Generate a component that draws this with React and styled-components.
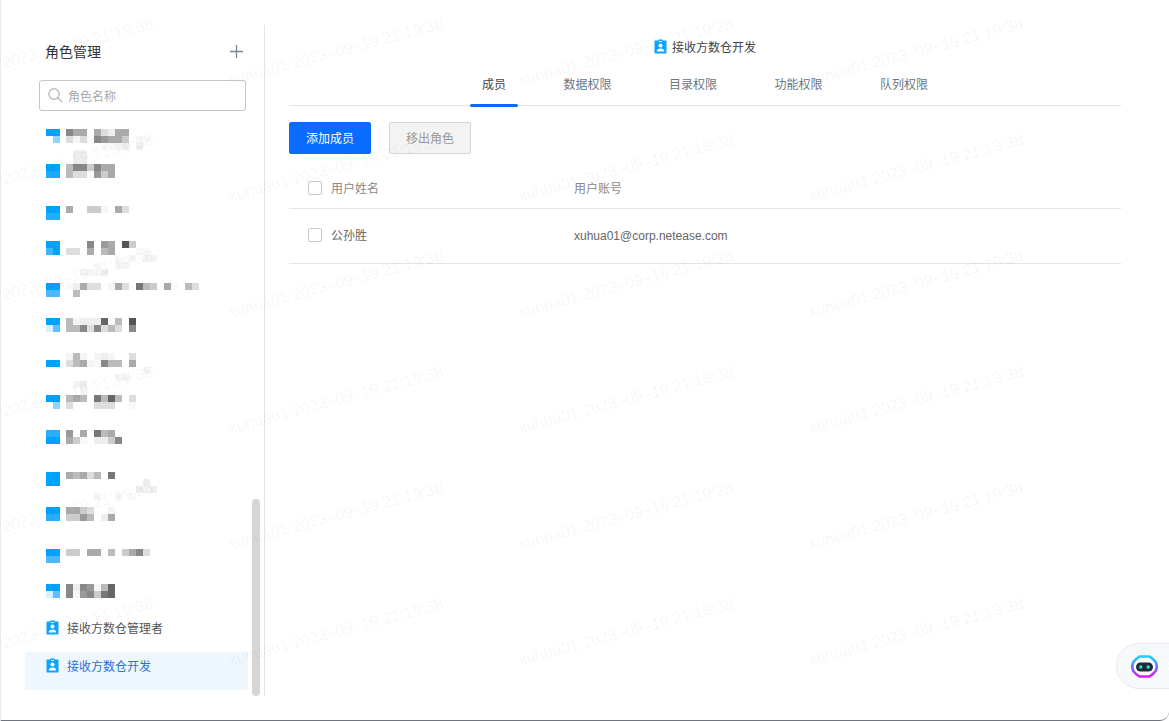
import React from "react";
import styled, { createGlobalStyle } from "styled-components";

const FONT = `"Liberation Sans", "Noto Sans CJK SC", sans-serif`;

const Global = createGlobalStyle`
  html, body { margin: 0; padding: 0; background: #fff; }
  body { font-family: ${FONT}; font-size: 12px; overflow: hidden; }
  * { box-sizing: border-box; }
`;

const Frame = styled.div`
  position: relative;
  width: 1169px;
  height: 721px;
  overflow: hidden;
  display: flex;
  padding: 25px 48px 24px 0;
  background: #fff;
  border-left: 1px solid #e6eaf2;
  border-bottom: 1px solid #6f757d;
  border-bottom-right-radius: 9px;
`;

const Sidebar = styled.aside`
  position: relative;
  flex: 0 0 264px;
  border-right: 1px solid #e4e4e6;
  display: flex;
  flex-direction: column;
`;

const SideHeader = styled.div`
  height: 55px;
  padding: 0 21px 3px 44px;
  display: flex;
  align-items: center;
  justify-content: space-between;
`;

const SideTitle = styled.h2`
  margin: 0;
  font-size: 14px;
  font-weight: 400;
  color: #333;
`;

const SearchBox = styled.div`
  margin-left: 38px;
  width: 207px;
  height: 31px;
  border: 1px solid #c6c6c6;
  border-radius: 3px;
  display: flex;
  align-items: center;
  gap: 5px;
  padding: 0 0 1px 7px;
  color: #a8a8a8;
  font-size: 12px;
`;

const Mosaic = styled.svg`
  display: block;
  margin: 14px 0 0 45px;
  flex: none;
`;

const Item = styled.div`
  margin-left: 24px;
  width: 223px;
  height: 38px;
  padding: 0 0 12px 21px;
  display: flex;
  align-items: center;
  gap: 8px;
  font-size: 12px;
  color: ${(p) => (p.$active ? "#2a6fdb" : "#555")};
  background: ${(p) => (p.$active ? "#eef6fe" : "transparent")};
`;

const ScrollThumb = styled.div`
  position: absolute;
  left: 251px;
  top: 474px;
  width: 8px;
  height: 197px;
  border-radius: 4px;
  background: #d6d6d6;
`;

const Main = styled.main`
  flex: 1;
  margin-left: 24px;
  display: flex;
  flex-direction: column;
`;

const RoleHeading = styled.div`
  height: 45px;
  padding-bottom: 2px;
  display: flex;
  align-items: center;
  justify-content: center;
  gap: 5px;
  color: #444;
  font-size: 12px;
`;

const Tabs = styled.nav`
  height: 36px;
  display: flex;
  justify-content: center;
  gap: 33.5px;
  border-bottom: 1px solid #e2e4e8;
`;

const Tab = styled.div`
  position: relative;
  width: ${(p) => (p.$active ? 48 : 72)}px;
  padding-top: 6px;
  text-align: center;
  font-size: 12px;
  line-height: 18px;
  color: ${(p) => (p.$active ? "#444" : "#6b7685")};
  ${(p) =>
    p.$active &&
    `&::after {
      content: "";
      position: absolute;
      left: 0; right: 0; bottom: -2px;
      height: 3px;
      border-radius: 2px;
      background: #0a6cff;
    }`}
`;

const Toolbar = styled.div`
  margin-top: 16px;
  display: flex;
  gap: 18px;
`;

const Button = styled.div`
  width: 82px;
  height: 32px;
  padding-bottom: 2px;
  display: flex;
  align-items: center;
  justify-content: center;
  border-radius: 2px;
  font-size: 12px;
  color: ${(p) => (p.$primary ? "#fff" : "#999")};
  background: ${(p) => (p.$primary ? "#0a6cff" : "#f3f3f3")};
  border: 1px solid ${(p) => (p.$primary ? "#0a6cff" : "#d6d6d6")};
`;

const Row = styled.div`
  height: 55px;
  padding-top: ${(p) => p.$pt || 0}px;
  padding-bottom: ${(p) => p.$pb || 0}px;
  display: grid;
  grid-template-columns: 285px 1fr;
  align-items: center;
  border-bottom: 1px solid #e2e4e8;
  color: ${(p) => p.$color};
  font-size: 12px;
`;

const NameCell = styled.div`
  display: flex;
  align-items: center;
  gap: 9px;
  padding-left: 19px;
`;

const Label = styled.span`
  margin-bottom: ${(p) => (p.$up > 0 ? p.$up * 2 : 0)}px;
  margin-top: ${(p) => (p.$up < 0 ? -p.$up * 2 : 0)}px;
`;

const Check = styled.span`
  width: 14px;
  height: 14px;
  border: 1px solid #c9c9c9;
  border-radius: 2px;
  background: #fff;
`;

const Overlay = styled.div`
  position: absolute;
  left: -100px;
  top: -6px;
  display: grid;
  grid-template-columns: repeat(4, 290px);
  grid-auto-rows: 116px;
  pointer-events: none;
`;

const Mark = styled.span`
  display: flex;
  align-items: center;
  justify-content: center;
  white-space: nowrap;
  font-size: 16px;
  font-family: "Liberation Sans", sans-serif;
  color: rgba(0, 0, 0, 0.05);
  transform: rotate(-15deg);
`;

const Robot = styled.div`
  position: absolute;
  left: 1115px;
  top: 643px;
  width: 90px;
  height: 46px;
  border-radius: 23px;
  background: #f7f8fa;
  border: 1px solid #e6e9f1;
  display: flex;
  align-items: center;
  padding-left: 13px;
  gap: 7px;
`;

const B = "#00a2ff";
const ICONS = [
  [0, B, B, null, "#8fd4ff"],
  [5, B, B, "#1aabff", "#1aabff"],
  [11, B, B, "#22adff", "#22adff"],
  [16, B, B, "#3db5ff", B],
  [22, B, B, "#4db8ff", "#4db8ff"],
  [27, B, B, "#d8f0ff", "#5cc0ff"],
  [33, B, B, null, null],
  [38, B, B, null, "#8fd4ff"],
  [43, "#29aeff", "#29aeff", B, B],
  [49, B, B, B, B],
  [54, B, B, "#29aeff", "#29aeff"],
  [60, B, B, "#4db8ff", "#4db8ff"],
  [65, B, B, "#d8f0ff", "#5cc0ff"],
];

const LINES = [
  [0, "8aa.adeaa"],
  [1, "dfdg89aac.gg"],
  [2, ".....ggfe.e"],
  [3, ".ee"],
  [4, ".ee"],
  [5, "b88c8aa"],
  [6, "bddg9ca"],
  [11, "a..ccf.ad"],
  [16, "...8.9a.5c"],
  [17, "dd.a.ba...gg"],
  [18, ".......g.f.ff"],
  [19, "....g..ff"],
  [20, "..ffge"],
  [22, "geadd.fad.7bc.ag.bd"],
  [23, ".b"],
  [27, "bfeee6gb.5"],
  [28, "bb8d8dbd.8"],
  [32, "fbf.fef..d"],
  [33, "dbafg8bb.a"],
  [34, "...........f"],
  [35, ".......ff"],
  [36, ".fe"],
  [37, "..f"],
  [38, "bab.7b6b.d"],
  [39, "d...ddd..g"],
  [43, "9.a.7ba"],
  [44, "acg.eec8"],
  [49, "abadb.7"],
  [50, "...........e"],
  [51, "..........efe"],
  [52, "....f..f.g"],
  [54, "aacd..f"],
  [55, "cc9b.ea"],
  [60, "cc.aa.b.ca8d"],
  [65, "8e89fb6"],
  [66, "8f98c76"],
];

const SHADE = {
  5: "#555", 6: "#666", 7: "#777", 8: "#888", 9: "#999",
  a: "#aaa", b: "#bbb", c: "#ccc", d: "#ddd", e: "#eee", f: "#f5f5f5", g: "#f9f9f9",
};

const BlurredRoles = () => (
  <Mosaic width="180" height="489" viewBox="0 0 180 489" shapeRendering="crispEdges" aria-hidden="true">
    {ICONS.map(([l, ...c]) =>
      c.map((fill, i) =>
        fill ? (
          <rect key={`${l}-${i}`} x={(i % 2) * 7} y={4 + (l + (i >> 1)) * 7} width="7" height="7" fill={fill} />
        ) : null
      )
    )}
    {LINES.map(([l, s]) =>
      [...s].map((ch, i) =>
        SHADE[ch] ? (
          <rect key={`t${l}-${i}`} x={20 + i * 7} y={4 + l * 7} width="7" height="7" fill={SHADE[ch]} />
        ) : null
      )
    )}
  </Mosaic>
);

const BadgeIcon = () => (
  <svg width="13" height="15" viewBox="0 0 13 15" aria-hidden="true">
    <path d="M1.5 1.5H4.2V.6h4.6v.9h2.7c.6 0 1 .4 1 1v11c0 .6-.4 1-1 1h-10c-.6 0-1-.4-1-1v-11c0-.6.4-1 1-1z" fill="#0aa5ff" />
    <circle cx="6.5" cy="6.4" r="2" fill="#fff" />
    <path d="M2.7 12.4c0-1.9 1.6-2.9 3.8-2.9s3.8 1 3.8 2.9z" fill="#fff" />
    <rect x="5" y="2" width="3" height="1" fill="#fff" />
  </svg>
);

const SearchIcon = () => (
  <svg width="16" height="16" viewBox="0 0 16 16" fill="none" stroke="#bcbcbc" strokeWidth="1.4" aria-hidden="true">
    <circle cx="7" cy="7" r="5.2" />
    <path d="M10.8 10.8l4 4" strokeLinecap="round" />
  </svg>
);

const PlusIcon = () => (
  <svg width="13" height="13" viewBox="0 0 13 13" stroke="#7b8794" strokeWidth="1.3" aria-hidden="true">
    <path d="M6.5 0v13M0 6.5h13" />
  </svg>
);

const RobotIcon = () => (
  <svg width="29" height="23" viewBox="0 0 29 23" fill="none" aria-hidden="true">
    <defs>
      <linearGradient id="rb" x1="0" y1="0" x2="0" y2="1">
        <stop offset="0" stopColor="#1fd0ff" />
        <stop offset="0.5" stopColor="#5a7cff" />
        <stop offset="1" stopColor="#d81cf0" />
      </linearGradient>
    </defs>
    <path d="M9.5 1.5h10l3.5 2.6 3 3.4.8 4-.8 4-3 3.4-3.5 2.6h-10L6 19l-3-3.4-.8-4 .8-4 3-3.4z" fill="#fff" stroke="url(#rb)" strokeWidth="2.6" strokeLinejoin="round" />
    <rect x="6" y="7.5" width="17" height="9" rx="4.5" fill="#1e2b36" />
    <circle cx="10.8" cy="12" r="1.7" fill="#22e6e0" />
    <circle cx="18.2" cy="12" r="1.7" fill="#22e6e0" />
  </svg>
);

const Chevron = () => (
  <svg width="8" height="10" viewBox="0 0 8 10" fill="none" stroke="#fff" strokeWidth="1.6" aria-hidden="true">
    <path d="M1 1l4 4-4 4" />
  </svg>
);

const TABS = ["成员", "数据权限", "目录权限", "功能权限", "队列权限"];
const marks = Array.from({ length: 24 }, (_, i) => i);

export default function App() {
  return (
    <>
      <Global />
      <Frame>
        <Sidebar>
          <SideHeader>
            <SideTitle>角色管理</SideTitle>
            <PlusIcon />
          </SideHeader>
          <SearchBox>
            <SearchIcon />
            角色名称
          </SearchBox>
          <BlurredRoles />
          <Item>
            <BadgeIcon />
            接收方数仓管理者
          </Item>
          <Item $active>
            <BadgeIcon />
            接收方数仓开发
          </Item>
          <ScrollThumb />
        </Sidebar>
        <Main>
          <RoleHeading>
            <BadgeIcon />
            接收方数仓开发
          </RoleHeading>
          <Tabs>
            {TABS.map((t, i) => (
              <Tab key={t} $active={i === 0}>
                {t}
              </Tab>
            ))}
          </Tabs>
          <Toolbar>
            <Button $primary>添加成员</Button>
            <Button>移出角色</Button>
          </Toolbar>
          <Row $pt={14} $color="#888">
            <NameCell>
              <Check />
              <Label $up={1}>用户姓名</Label>
            </NameCell>
            <Label $up={1}>用户账号</Label>
          </Row>
          <Row $pb={2} $color="#666">
            <NameCell>
              <Check />
              <Label $up={1}>公孙胜</Label>
            </NameCell>
            <Label $up={-1}>xuhua01@corp.netease.com</Label>
          </Row>
        </Main>
        <Overlay>
          {marks.map((i) => (
            <Mark key={i}>xuhua01 2023–09–19 21:19:38</Mark>
          ))}
        </Overlay>
        <Robot>
          <RobotIcon />
          <Chevron />
        </Robot>
      </Frame>
    </>
  );
}
